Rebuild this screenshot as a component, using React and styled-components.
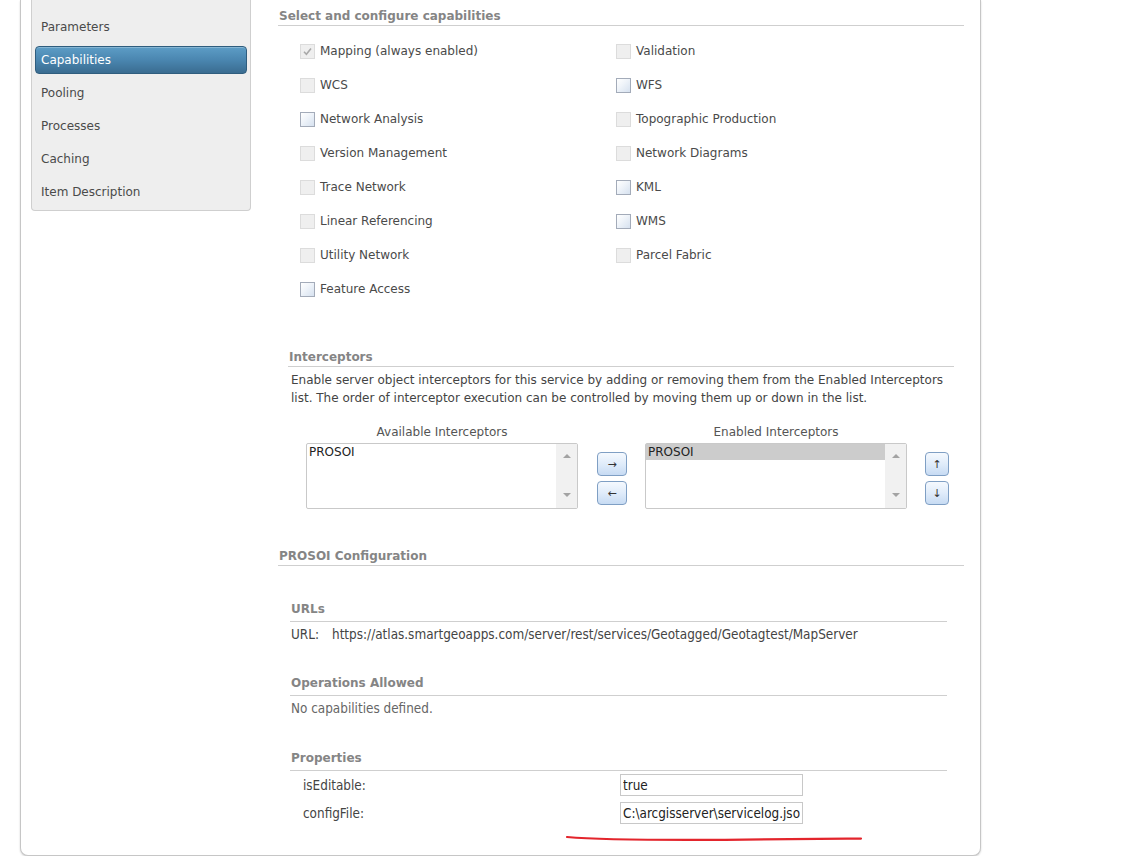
import React from "react";
import styled, { createGlobalStyle, css } from "styled-components";

const GlobalStyle = createGlobalStyle`
  html, body {
    margin: 0;
    padding: 0;
    background: #ffffff;
  }
  body {
    font-family: "DejaVu Sans", Verdana, sans-serif;
    font-size: 12px;
    color: #444;
  }
  * { box-sizing: border-box; }
`;

const Frame = styled.div`
  margin-left: 20px;
  width: 961px;
  display: flex;
  align-items: flex-start;
  gap: 27px;
  padding: 0 16px 31px 10px;
  background: #fff;
  border: 1px solid #c6c6c6;
  border-top: none;
  border-radius: 0 0 8px 8px;
  box-shadow: 0 1px 2px rgba(0, 0, 0, 0.18);
`;

const SideNav = styled.nav`
  width: 220px;
  flex: none;
  display: flex;
  flex-direction: column;
  gap: 5px;
  padding: 13px 3px 4px;
  background: #eeeeee;
  border: 1px solid #cfcfcf;
  border-top: none;
  border-radius: 0 0 4px 4px;
`;

const NavItem = styled.div`
  height: 28px;
  display: flex;
  align-items: center;
  padding: 0 5px;
  border: 1px solid transparent;
  border-radius: 4px;
  color: #4a4a4a;
  ${(p) =>
    p.$active &&
    css`
      color: #ffffff;
      border-color: #2f5d7e;
      background: linear-gradient(#5d9dc6 0%, #4a86b0 50%, #3a6c90 100%);
      box-shadow: inset 0 1px 0 rgba(255, 255, 255, 0.25);
    `}
`;

const Main = styled.main`
  width: 686px;
  flex: none;
  display: flex;
  flex-direction: column;
  padding-top: 7px;
`;

const Heading = styled.div`
  font-weight: bold;
  color: #858585;
  line-height: 16px;
  padding: 1px 0 1px 1px;
  border-bottom: 1px solid #cfcfcf;
  margin-top: ${(p) => p.$top || 0}px;
`;

const CapGrid = styled.div`
  display: grid;
  grid-template-columns: 316px 1fr;
  grid-auto-rows: 34px;
  padding-left: 22px;
  margin-top: 8px;
`;

const CapItem = styled.label`
  display: flex;
  align-items: center;
  gap: 5px;
  color: #4a4a4a;
`;

const Box = styled.span`
  width: 15px;
  height: 15px;
  flex: none;
  display: flex;
  align-items: center;
  justify-content: center;
  border: 1px solid #dcdcdc;
  background: #efefef;
  ${(p) =>
    p.$enabled &&
    css`
      border-color: #a3abb9;
      background: linear-gradient(135deg, #ffffff 0%, #eef3f9 45%, #d6e1ef 100%);
    `}
`;

const Interceptors = styled.section`
  margin: 42px 10px 0;
`;

const Description = styled.p`
  margin: 4px 0 0;
  padding: 0 2px 0 3px;
  line-height: 18px;
  color: #444;
`;

const ListRow = styled.div`
  display: flex;
  align-items: flex-end;
  margin-top: 18px;
  padding-left: 18px;
`;

const ListColumn = styled.div`
  display: flex;
  flex-direction: column;
  align-items: center;
  gap: 3px;
`;

const ListLabel = styled.div`
  line-height: 15px;
  color: #555;
`;

const ListBox = styled.div`
  width: ${(p) => p.$width}px;
  height: 66px;
  display: flex;
  border: 1px solid #c9c9c9;
  border-radius: 2px;
  background: #fff;
`;

const Options = styled.div`
  flex: 1;
  min-width: 0;
`;

const Option = styled.div`
  line-height: 16px;
  padding-left: 2px;
  color: #222;
  background: ${(p) => (p.$selected ? "#cccccc" : "transparent")};
`;

const ScrollTrack = styled.div`
  width: 21px;
  flex: none;
  display: flex;
  flex-direction: column;
  justify-content: space-between;
  align-items: center;
  padding: 10px 0 11px;
  background: #f1f1f1;
`;

const Arrow = styled.span`
  width: 0;
  height: 0;
  border-left: 4px solid transparent;
  border-right: 4px solid transparent;
  ${(p) =>
    p.$down
      ? css`border-top: 4px solid #a3a3a3;`
      : css`border-bottom: 4px solid #a3a3a3;`}
`;

const ButtonStack = styled.div`
  display: flex;
  flex-direction: column;
  gap: 5px;
  margin: 0 ${(p) => p.$right || 0}px 4px ${(p) => p.$left || 0}px;
`;

const MoveButton = styled.button`
  width: ${(p) => p.$width}px;
  height: 24px;
  padding: 0;
  display: flex;
  align-items: center;
  justify-content: center;
  border: 1px solid #7f9fc4;
  border-radius: 4px;
  background: linear-gradient(#f5f9fe 0%, #e0ecfa 50%, #c7dbf3 100%);
  font-family: "DejaVu Sans", sans-serif;
  font-size: 11px;
  color: #333;
  cursor: pointer;
`;

const ConfigBody = styled.div`
  padding: 0 17px 0 12px;
  font-family: "DejaVu Sans Condensed", "DejaVu Sans", sans-serif;
  font-stretch: condensed;
`;

const SubHeading = styled.div`
  font-family: "DejaVu Sans", Verdana, sans-serif;
  font-stretch: normal;
  font-weight: bold;
  color: #858585;
  line-height: 16px;
  padding: 0 0 4px 1px;
  border-bottom: 1px solid #cfcfcf;
  margin-top: ${(p) => p.$top}px;
`;

const ConfigText = styled.div`
  font-size: 13.4px;
  line-height: 16px;
  margin-top: 5px;
  padding-left: 1px;
  color: ${(p) => (p.$muted ? "#666" : "#444")};
`;

const UrlKey = styled.span`
  display: inline-block;
  width: 41px;
`;

const PropList = styled.div`
  position: relative;
  display: flex;
  flex-direction: column;
  gap: 6px;
  margin-top: 3px;
`;

const PropRow = styled.div`
  display: flex;
  align-items: center;
  height: 22px;
  padding-left: 13px;
`;

const PropKey = styled.span`
  width: 317px;
  font-size: 13.4px;
  color: #444;
`;

const PropInput = styled.input`
  width: 183px;
  height: 22px;
  padding: 0 2px;
  border: 1px solid #c8c8c8;
  font-family: "DejaVu Sans Condensed", "DejaVu Sans", sans-serif;
  font-stretch: condensed;
  font-size: 13.4px;
  color: #222;
  background: #fff;
  outline: none;
`;

/* hand-drawn red underline marking the config file path */
const Scribble = styled.svg`
  position: absolute;
  left: 275px;
  top: 58px;
  overflow: visible;
  pointer-events: none;
`;

const Check = () => (
  <svg width="11" height="11" viewBox="0 0 11 11">
    <path d="M2 5.8 L4.4 8.2 L9 2.6" fill="none" stroke="#a9a9a9" strokeWidth="1.6" />
  </svg>
);

const capabilities = [
  ["Mapping (always enabled)", "disabled-checked"],
  ["Validation", "disabled"],
  ["WCS", "disabled"],
  ["WFS", "enabled"],
  ["Network Analysis", "enabled"],
  ["Topographic Production", "disabled"],
  ["Version Management", "disabled"],
  ["Network Diagrams", "disabled"],
  ["Trace Network", "disabled"],
  ["KML", "enabled"],
  ["Linear Referencing", "disabled"],
  ["WMS", "enabled"],
  ["Utility Network", "disabled"],
  ["Parcel Fabric", "disabled"],
  ["Feature Access", "enabled"],
];

const navItems = [
  "Parameters",
  "Capabilities",
  "Pooling",
  "Processes",
  "Caching",
  "Item Description",
];

export default function App() {
  return (
    <>
      <GlobalStyle />
      <Frame>
        <SideNav>
          {navItems.map((item) => (
            <NavItem key={item} $active={item === "Capabilities"}>
              {item}
            </NavItem>
          ))}
        </SideNav>

        <Main>
          <Heading>Select and configure capabilities</Heading>
          <CapGrid>
            {capabilities.map(([name, state]) => (
              <CapItem key={name}>
                <Box $enabled={state === "enabled"}>
                  {state === "disabled-checked" && <Check />}
                </Box>
                {name}
              </CapItem>
            ))}
          </CapGrid>

          <Interceptors>
            <Heading>Interceptors</Heading>
            <Description>
              Enable server object interceptors for this service by adding or removing them from the Enabled Interceptors
              <br />
              list. The order of interceptor execution can be controlled by moving them up or down in the list.
            </Description>
            <ListRow>
              <ListColumn>
                <ListLabel>Available Interceptors</ListLabel>
                <ListBox $width={272}>
                  <Options>
                    <Option>PROSOI</Option>
                  </Options>
                  <ScrollTrack>
                    <Arrow />
                    <Arrow $down />
                  </ScrollTrack>
                </ListBox>
              </ListColumn>
              <ButtonStack $left={19} $right={18}>
                <MoveButton $width={30}>→</MoveButton>
                <MoveButton $width={30}>←</MoveButton>
              </ButtonStack>
              <ListColumn>
                <ListLabel>Enabled Interceptors</ListLabel>
                <ListBox $width={262}>
                  <Options>
                    <Option $selected>PROSOI</Option>
                  </Options>
                  <ScrollTrack>
                    <Arrow />
                    <Arrow $down />
                  </ScrollTrack>
                </ListBox>
              </ListColumn>
              <ButtonStack $left={18}>
                <MoveButton $width={24}>↑</MoveButton>
                <MoveButton $width={24}>↓</MoveButton>
              </ButtonStack>
            </ListRow>
          </Interceptors>

          <Heading $top={38}>PROSOI Configuration</Heading>
          <ConfigBody>
            <SubHeading $top={35}>URLs</SubHeading>
            <ConfigText>
              <UrlKey>URL:</UrlKey>
              https://atlas.smartgeoapps.com/server/rest/services/Geotagged/Geotagtest/MapServer
            </ConfigText>

            <SubHeading $top={32}>Operations Allowed</SubHeading>
            <ConfigText $muted>No capabilities defined.</ConfigText>

            <SubHeading $top={33}>Properties</SubHeading>
            <PropList>
              <PropRow>
                <PropKey>isEditable:</PropKey>
                <PropInput readOnly value="true" />
              </PropRow>
              <PropRow>
                <PropKey>configFile:</PropKey>
                <PropInput readOnly value="C:\arcgisserver\servicelog.json" />
              </PropRow>
              <Scribble width="300" height="12" viewBox="0 0 300 12">
                <path
                  d="M2 5 C 30 7.5, 90 8.2, 160 7.8 S 260 6.8, 296 6.6"
                  fill="none"
                  stroke="#e3252c"
                  strokeWidth="2.2"
                  strokeLinecap="round"
                />
              </Scribble>
            </PropList>
          </ConfigBody>
        </Main>
      </Frame>
    </>
  );
}
